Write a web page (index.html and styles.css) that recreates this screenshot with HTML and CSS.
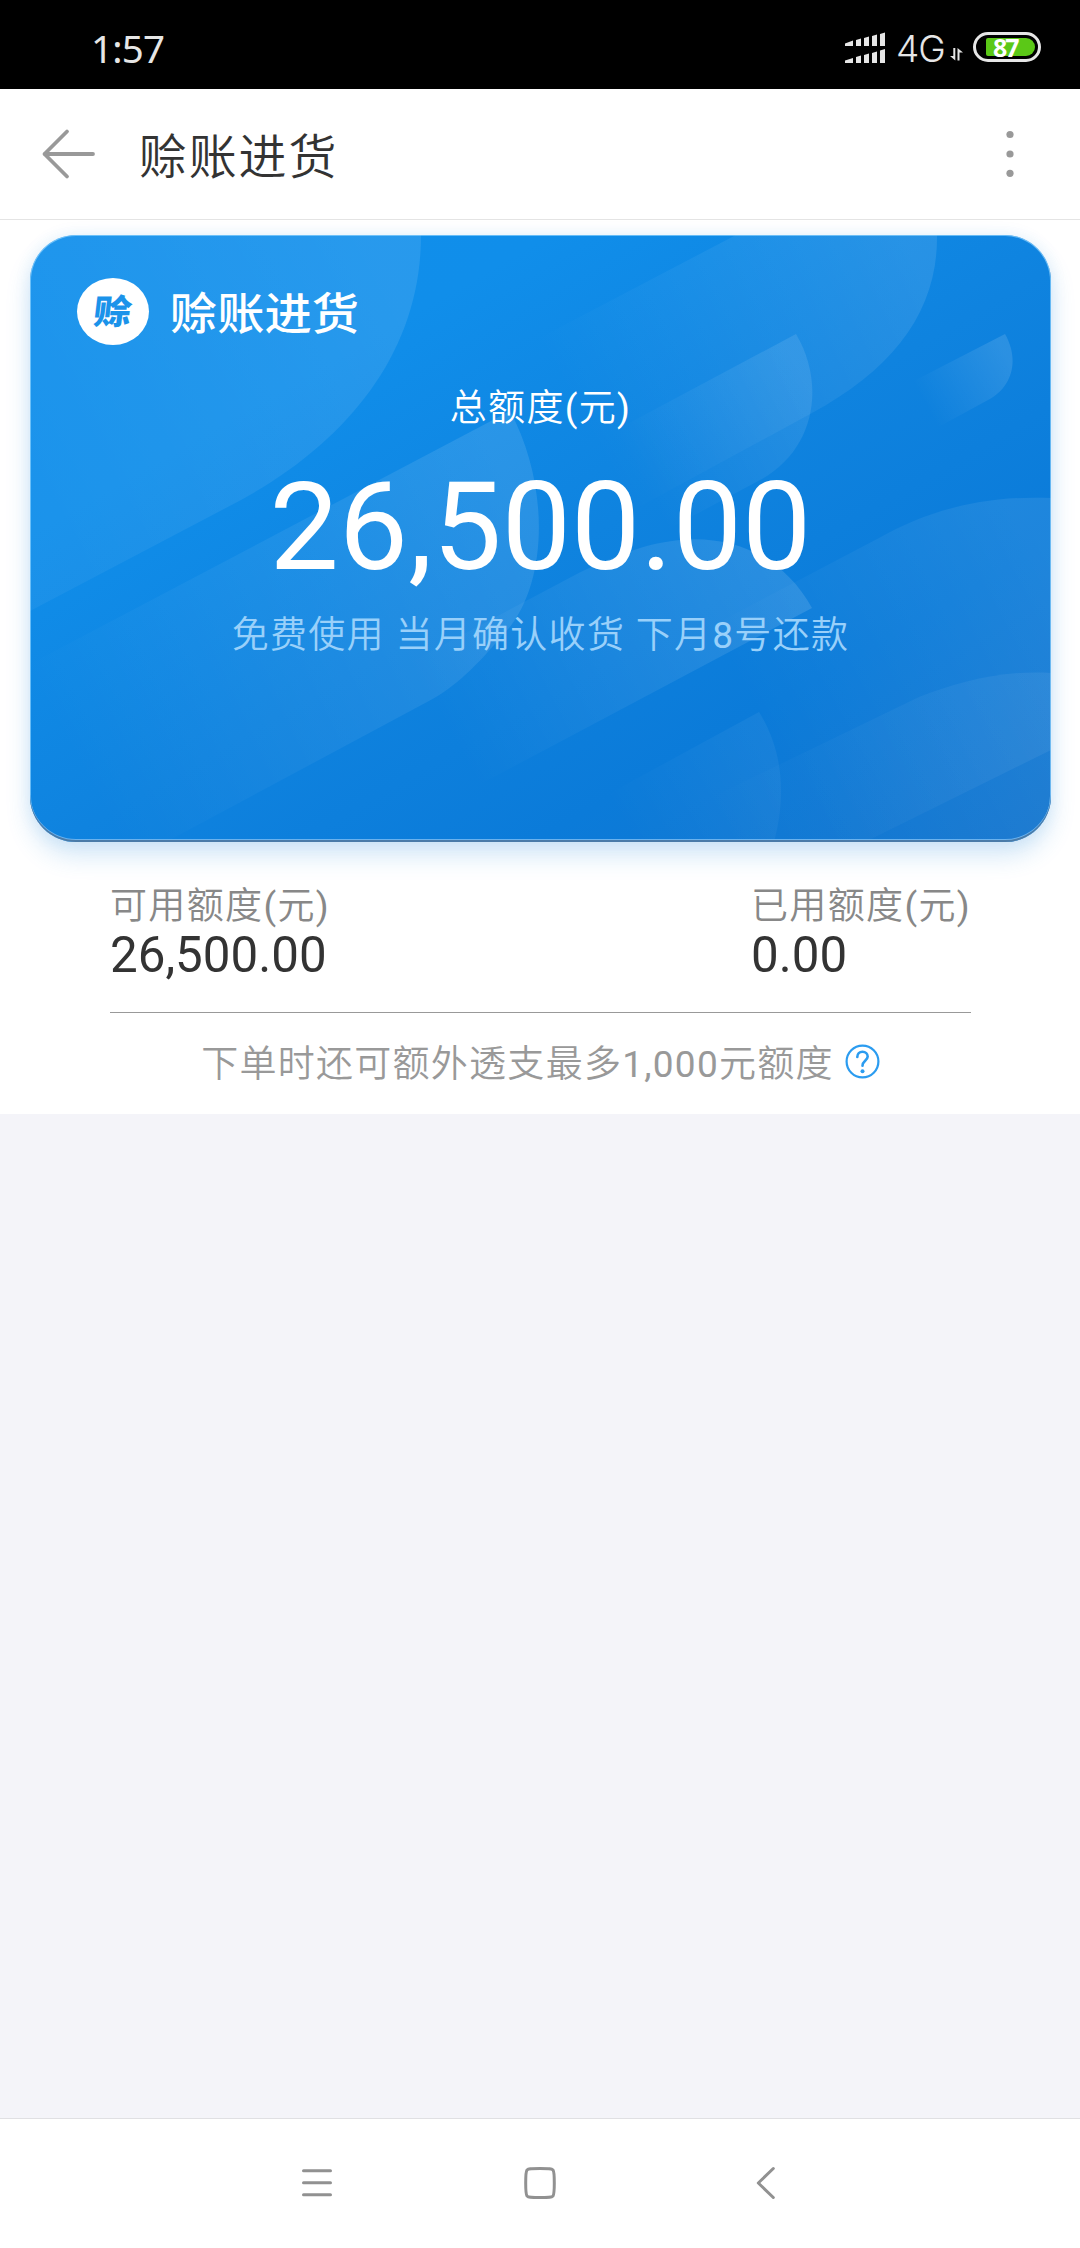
FILE: index.html
```html
<!DOCTYPE html>
<html lang="zh-CN">
<head>
<meta charset="utf-8">
<title>赊账进货</title>
<link rel="stylesheet" href="styles.css">
</head>
<body>
<div class="screen">
  <div class="status">
    <span class="clock">1:57</span>
    <div class="status-right">
      <svg class="signal" width="41" height="32" viewBox="0 0 41 32" fill="#e6e6e6">
        <path d="M0 11.500 8 8.500V14H0zM11 8l5-1.500V14h-5zM19 6l5-1.500V14h-5zM27 4l5-1.500V14h-5zM35 2l5-1.500V14h-5z"/>
        <path d="M0 28.500 8 26V31H0zM11 25l5-1.500V31h-5zM19 23l5-1.500V31h-5zM27 21l5-1.500V31h-5zM35 18.500l5-1.500V31h-5z"/>
      </svg>
      <span class="network">4G</span>
      <svg class="transfer" width="13" height="13" viewBox="0 0 13 13" fill="#e6e6e6">
        <path d="M3.300 0h2v12.500L0 8h3.300zM7.500 12.500h2V4.500H13L7.500 0z"/>
      </svg>
      <div class="battery"><div class="charge">87</div></div>
    </div>
  </div>

  <header class="topbar">
    <svg class="back" width="56" height="52" viewBox="0 0 56 52" fill="none" stroke="#999" stroke-width="3.800" stroke-linecap="round" stroke-linejoin="round">
      <path d="M27 3.500 4.500 26 27 48.500M4.500 26H53"/>
    </svg>
    <h1 class="page-title">赊账进货</h1>
    <svg class="more" width="10" height="48" viewBox="0 0 10 48" fill="#999">
      <circle cx="5" cy="4.500" r="3.600"/><circle cx="5" cy="24" r="3.600"/><circle cx="5" cy="43.300" r="3.600"/>
    </svg>
  </header>

  <main class="panel">
    <section class="card">
      <svg class="waves" viewBox="30 235 1021 607" preserveAspectRatio="none">
        <defs>
          <linearGradient id="a" gradientUnits="userSpaceOnUse" x1="30" y1="500" x2="400" y2="300"><stop offset="0" stop-color="#fff" stop-opacity=".045"/><stop offset="1" stop-color="#fff" stop-opacity=".1"/></linearGradient>
          <linearGradient id="b" gradientUnits="userSpaceOnUse" x1="70" y1="760" x2="530" y2="510"><stop offset="0" stop-color="#fff" stop-opacity="0"/><stop offset="1" stop-color="#fff" stop-opacity=".11"/></linearGradient>
          <linearGradient id="c" gradientUnits="userSpaceOnUse" x1="590" y1="440" x2="915" y2="260"><stop offset="0" stop-color="#fff" stop-opacity="0"/><stop offset="1" stop-color="#fff" stop-opacity=".1"/></linearGradient>
          <linearGradient id="d" gradientUnits="userSpaceOnUse" x1="640" y1="480" x2="808" y2="390"><stop offset="0" stop-color="#fff" stop-opacity="0"/><stop offset="1" stop-color="#fff" stop-opacity=".1"/></linearGradient>
          <linearGradient id="e" gradientUnits="userSpaceOnUse" x1="925" y1="405" x2="1008" y2="360"><stop offset="0" stop-color="#fff" stop-opacity="0"/><stop offset="1" stop-color="#fff" stop-opacity=".12"/></linearGradient>
          <linearGradient id="f" gradientUnits="userSpaceOnUse" x1="740" y1="690" x2="1030" y2="530"><stop offset="0" stop-color="#fff" stop-opacity="0"/><stop offset="1" stop-color="#fff" stop-opacity=".08"/></linearGradient>
          <linearGradient id="g" gradientUnits="userSpaceOnUse" x1="720" y1="830" x2="1050" y2="680"><stop offset="0" stop-color="#fff" stop-opacity="0"/><stop offset="1" stop-color="#fff" stop-opacity=".065"/></linearGradient>
          <linearGradient id="h" gradientUnits="userSpaceOnUse" x1="450" y1="740" x2="780" y2="560"><stop offset="0" stop-color="#fff" stop-opacity="0"/><stop offset="1" stop-color="#fff" stop-opacity=".12"/></linearGradient>
          <linearGradient id="i" gradientUnits="userSpaceOnUse" x1="630" y1="840" x2="780" y2="750"><stop offset="0" stop-color="#fff" stop-opacity="0"/><stop offset="1" stop-color="#fff" stop-opacity=".05"/></linearGradient>
        </defs>
        <path fill="url(#a)" d="M30 235H421C421 350 350 440 241 500L30 611Z"/>
        <path fill="url(#b)" d="M30 664 510 411C550 485 550 590 500 638C480 662 455 688 427 702L166 842H30Z"/>
        <path fill="url(#c)" d="M736 235H937C938 310 895 368 812 413L560 550 440 390Z"/>
        <path fill="url(#d)" d="M796 334C826 385 815 450 760 480L620 555 560 460Z"/>
        <path fill="url(#e)" d="M1005 334C1020 360 1012 388 988 400L900 448 875 401Z"/>
        <path fill="url(#f)" d="M1051 498C980 495 925 512 879 538L560 706 700 842H1051Z"/>
        <path fill="url(#g)" d="M1051 673C1000 670 960 682 919 697L700 803 735 842H865L1051 750Z"/>
        <path fill="url(#h)" d="M812 608C780 550 720 530 660 543C640 546 600 562 575 575L400 668 475 787Z"/>
        <path fill="url(#i)" d="M759 712C780 745 788 790 774 842H520Z"/>
      </svg>
      <div class="brand">
        <span class="brand-mark"><span class="brand-glyph">赊</span></span>
        <span class="brand-name">赊账进货</span>
      </div>
      <p class="total-label">总额度(元)</p>
      <p class="total">26,500.00</p>
      <p class="terms">免费使用 当月确认收货 下月8号还款</p>
    </section>

    <section class="balances">
      <div class="balance"><span class="label">可用额度(元)</span><span class="value">26,500.00</span></div>
      <div class="balance"><span class="label">已用额度(元)</span><span class="value">0.00</span></div>
    </section>

    <div class="note">
      <span class="note-text">下单时还可额外透支最多1,000元额度</span>
      <svg class="help" width="35" height="35" viewBox="0 0 35 35" fill="none" stroke="#2b9cf0" stroke-width="2.200">
        <circle cx="17.500" cy="17.500" r="15.900"/>
        <path stroke-width="2.600" stroke-linecap="round" d="M12.300 13C12.300 9.700 14.500 7.700 17.500 7.700S22.700 9.800 22.700 12.600C22.700 16.400 17.500 16.800 17.500 21.800"/>
        <circle cx="17.500" cy="27.200" r="2" fill="#2b9cf0" stroke="none"/>
      </svg>
    </div>
  </main>

  <div class="empty"></div>

  <nav class="navbar">
    <svg width="34" height="34" viewBox="0 0 34 34" fill="none" stroke="#919191" stroke-width="3" stroke-linecap="round"><path d="M3.500 4.700h27M3.500 16.700h27M3.500 28.800h27"/></svg>
    <svg width="34" height="34" viewBox="0 0 34 34" fill="none" stroke="#919191" stroke-width="3"><path d="M17 2.500C27 2.500 28.600 2.600 30 4C31.200 5.500 31.300 8 31.300 17S31.200 28.500 30 30C28.600 31.400 27 31.500 17 31.500S5.400 31.400 4 30C2.800 28.500 2.700 26 2.700 17S2.800 5.500 4 4C5.400 2.600 7 2.500 17 2.500Z"/></svg>
    <svg width="34" height="34" viewBox="0 0 34 34" fill="none" stroke="#919191" stroke-width="3" stroke-linecap="round" stroke-linejoin="round"><path d="M28.300 2.500 13.300 17 28.300 31.500"/></svg>
  </nav>
</div>
</body>
</html>
```
FILE: styles.css
```css
* { box-sizing: border-box; }

body {
  margin: 0;
  font-family: Roboto, "Noto Sans CJK SC DemiLight", "Noto Sans CJK SC", sans-serif;
  background: #fff;
}

h1, p { margin: 0; font-weight: 400; }
svg { display: block; flex: none; }

.screen {
  width: 1080px;
  height: 2248px;
  display: flex;
  flex-direction: column;
  overflow: hidden;
}

.status {
  height: 89px;
  flex: none;
  background: #000;
  color: #e6e6e6;
  display: flex;
  justify-content: space-between;
  padding: 0 39px 0 91px;
}

.clock {
  font: 400 38.500px/96px "Noto Sans", sans-serif;
  letter-spacing: -.8px;
}

.status-right { display: flex; align-items: flex-start; }
.signal { margin: 32px 10px 0 0; }

.network {
  width: 54px;
  font: 350 37px/97px Inter, sans-serif;
  letter-spacing: -1px;
}

.transfer { margin: 48px 10px 0 0; }

.battery {
  width: 68px;
  height: 30px;
  margin-top: 32px;
  border: 3px solid #e6e6e6;
  border-radius: 15px;
  padding: 3px 3px 3px 10px;
}

.charge {
  height: 18px;
  background: #5bc817;
  border-radius: 2px 9px 9px 2px;
  color: #fff;
  font: 700 25px/18px "Noto Sans", sans-serif;
  letter-spacing: -2px;
  padding-left: 7px;
}

.topbar {
  height: 131px;
  flex: none;
  border-bottom: 1px solid #e4e4e4;
  display: flex;
  align-items: center;
  padding: 0 65px 0 40px;
}

.page-title {
  flex: 1;
  margin: 8px 0 0 43px;
  font-size: 48px;
  line-height: 70px;
  letter-spacing: 1.800px;
  color: #333;
}

.panel {
  height: 894px;
  flex: none;
  padding: 15px 29px 0 30px;
}

.card {
  position: relative;
  height: 607px;
  border-radius: 46px;
  color: #fff;
  text-align: center;
  padding-top: 43px;
  background: linear-gradient(150deg, #108fec 0%, #108eea 25%, #0f83df 52%, #0b7bd9 75%, #1475ce 100%);
  box-shadow: 0 14px 24px rgba(40, 140, 220, .2), 0 0 16px rgba(40, 140, 220, .1);
}

.card::after {
  content: "";
  position: absolute;
  inset: 0;
  border-radius: inherit;
  box-shadow: inset 0 -2px 0 #4a7ba8, inset 0 -3px 0 #6ab2ee, inset 0 0 0 1px rgba(150, 215, 255, .65);
}

.waves {
  position: absolute;
  inset: 0;
  width: 100%;
  height: 100%;
  border-radius: 46px;
}

.brand {
  position: relative;
  display: flex;
  align-items: center;
  height: 67px;
  margin-left: 47px;
}

.brand-mark {
  width: 72px;
  height: 67px;
  border-radius: 50%;
  background: #fff;
  color: #1b93ea;
  display: flex;
  align-items: center;
  justify-content: center;
}

.brand-glyph {
  font: 900 34px/40px "Noto Sans CJK SC", sans-serif;
  margin-top: -4px;
  transform: scaleX(1.12) skewX(-6deg);
}

.brand-name {
  margin: -2px 0 0 21px;
  font: 500 44px/60px "Noto Sans CJK SC", sans-serif;
  transform: scaleX(1.073);
  transform-origin: left;
}

.total-label {
  position: relative;
  margin-top: 36px;
  font-size: 37px;
  line-height: 56px;
  letter-spacing: 1.300px;
}

.total {
  position: relative;
  margin-top: 15px;
  font-size: 123.300px;
  line-height: 150px;
}

.terms {
  position: relative;
  margin-top: 6px;
  font-size: 37px;
  line-height: 56px;
  letter-spacing: 1.300px;
  color: #99d0fa;
}

.balances {
  display: flex;
  justify-content: space-between;
  height: 171px;
  margin: 0 80px;
  padding-top: 37px;
  border-bottom: 1px solid #999;
}

.balance { display: flex; flex-direction: column; }

.label {
  font-size: 37px;
  line-height: 56px;
  letter-spacing: 1.350px;
  color: #888;
}

.value {
  font-size: 49.300px;
  line-height: 54px;
  margin-top: -7px;
  color: #333;
}

.note {
  display: flex;
  justify-content: center;
  align-items: center;
  height: 98px;
}

.note-text {
  margin-top: 5px;
  font-size: 37px;
  line-height: 56px;
  letter-spacing: 1.270px;
  color: #999;
}

.help { margin: -1px 0 0 11px; }

.empty { flex: 1; background: #f4f4f9; }

.navbar {
  height: 130px;
  flex: none;
  border-top: 1px solid #e0e0e3;
  display: grid;
  grid-template-columns: 34px 34px 34px;
  column-gap: 188.500px;
  align-items: center;
  padding-left: 300px;
  padding-bottom: 1px;
}
```
